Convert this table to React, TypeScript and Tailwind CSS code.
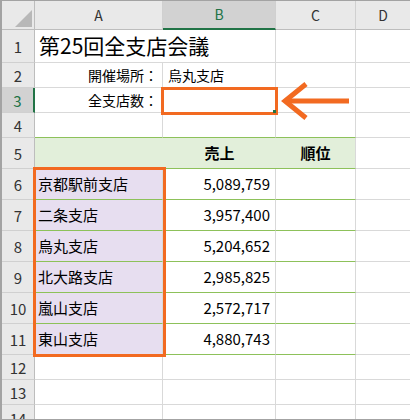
import type { ReactNode } from 'react';

const font = { fontFamily: '"Noto Sans CJK JP", "Noto Sans", sans-serif' };

const branches = [
  { n: 6, name: '京都駅前支店', sales: '5,089,759' },
  { n: 7, name: '二条支店', sales: '3,957,400' },
  { n: 8, name: '烏丸支店', sales: '5,204,652' },
  { n: 9, name: '北大路支店', sales: '2,985,825' },
  { n: 10, name: '嵐山支店', sales: '2,572,717' },
  { n: 11, name: '東山支店', sales: '4,880,743' },
];

function RowHead({ n, active }: { n: number; active?: boolean }) {
  return (
    <div
      className={
        active
          ? 'flex items-center justify-center pt-[3px] bg-[#d2d2d2] border-b border-b-[#d0d0d0] border-r-2 border-r-[#217346] text-[15px] text-[#217346]'
          : 'flex items-center justify-center pt-[3px] bg-[#e9e9e9] border-b border-r border-b-[#d0d0d0] border-r-[#bdbdbd] text-[15px] text-[#333]'
      }
    >
      {n}
    </div>
  );
}

function Cell({ className = '', children }: { className?: string; children?: ReactNode }) {
  return <div className={'flex items-center whitespace-nowrap ' + className}>{children}</div>;
}

const grid = 'border-r border-b border-[#d9d9d9]';
const greenRow = 'border-r border-b border-r-[#d9d9d9] border-b-[#8dc15a]';

export default function App() {
  return (
    <div
      className="relative w-[410px] h-[420px] overflow-hidden bg-white border-t border-b border-l-2 border-[#a3a3a3] text-black"
      style={font}
    >
      <div className="grid h-full grid-cols-[33px_128px_113px_80px_1fr] grid-rows-[29px_33px_25px_25px_25px_31px_31px_31px_31px_31px_31px_31px_25px_25px_1fr]">
        {/* column headers */}
        <div className="flex items-end justify-end pr-[2px] pb-[2px] bg-[#e9e9e9] border-r border-b border-r-[#bdbdbd] border-b-[#bdbdbd]">
          <svg width="17" height="17" viewBox="0 0 17 17">
            <polygon points="17,0 17,17 0,17" fill="#b8b8b8" />
          </svg>
        </div>
        <div className="flex items-center justify-center bg-[#e9e9e9] border-r border-b border-r-[#d0d0d0] border-b-[#bdbdbd] text-[14px] text-[#333]">A</div>
        <div className="flex items-center justify-center bg-[#d2d2d2] border-r border-b-2 border-r-[#d0d0d0] border-b-[#217346] text-[14px] text-[#217346]">B</div>
        <div className="flex items-center justify-center bg-[#e9e9e9] border-r border-b border-r-[#d0d0d0] border-b-[#bdbdbd] text-[14px] text-[#333]">C</div>
        <div className="flex items-center justify-center bg-[#e9e9e9] border-b border-b-[#bdbdbd] text-[14px] text-[#333]">D</div>

        {/* row 1 */}
        <RowHead n={1} />
        <Cell className="border-b border-[#d9d9d9] pl-[4px] text-[21px] overflow-visible">第25回全支店会議</Cell>
        <Cell className={grid} />
        <Cell className={grid} />
        <Cell className="border-b border-[#d9d9d9]" />

        {/* row 2 */}
        <RowHead n={2} />
        <Cell className={grid + ' justify-end pr-[4px] text-[14px]'}>開催場所：</Cell>
        <Cell className={grid + ' pl-[5px] text-[14px]'}>烏丸支店</Cell>
        <Cell className={grid} />
        <Cell className="border-b border-[#d9d9d9]" />

        {/* row 3 */}
        <RowHead n={3} active />
        <Cell className={grid + ' justify-end pr-[4px] text-[14px]'}>全支店数：</Cell>
        <Cell className={grid} />
        <Cell className={grid} />
        <Cell className="border-b border-[#d9d9d9]" />

        {/* row 4 */}
        <RowHead n={4} />
        <Cell className={greenRow} />
        <Cell className={greenRow} />
        <Cell className={greenRow} />
        <Cell className="border-b border-[#d9d9d9]" />

        {/* row 5 */}
        <RowHead n={5} />
        <Cell className="bg-[#e2efda] border-b border-b-[#8dc15a]" />
        <Cell className="bg-[#e2efda] border-b border-b-[#8dc15a] justify-center text-[15px] font-bold">売上</Cell>
        <Cell className={greenRow + ' bg-[#e2efda] justify-center text-[15px] font-bold'}>順位</Cell>
        <Cell className="border-b border-[#d9d9d9]" />

        {branches.map((b) => (
          <div key={b.n} className="contents">
            <RowHead n={b.n} />
            <Cell className={greenRow + ' bg-[#e7def0] pl-[3px] text-[15px]'}>{b.name}</Cell>
            <Cell className={greenRow + ' justify-end pr-[5px] text-[15px]'}>{b.sales}</Cell>
            <Cell className={greenRow} />
            <Cell className="border-b border-[#d9d9d9]" />
          </div>
        ))}

        {[12, 13, 14].map((n) => (
          <div key={n} className="contents">
            <RowHead n={n} />
            <Cell className={grid} />
            <Cell className={grid} />
            <Cell className={grid} />
            <Cell className="border-b border-[#d9d9d9]" />
          </div>
        ))}
      </div>

      {/* highlight on B3 */}
      <div className="absolute left-[159px] top-[86px] w-[117px] h-[28px] border-[3px] border-[#f26a21]" />
      <div className="absolute left-[271px] top-[109px] w-[3px] h-[3px] bg-[#217346]" />

      {/* highlight on A6:A11 */}
      <div className="absolute left-[31px] top-[166px] w-[133px] h-[190px] border-[3px] border-[#f26a21]" />

      {/* arrow */}
      <svg className="absolute left-[276px] top-[79px]" width="74" height="42" viewBox="0 0 74 42">
        <line x1="8" y1="21" x2="71" y2="21" stroke="#f26a21" strokeWidth="5" />
        <polyline points="28,4 7,21 28,38" fill="none" stroke="#f26a21" strokeWidth="5" strokeLinejoin="miter" />
      </svg>
    </div>
  );
}
